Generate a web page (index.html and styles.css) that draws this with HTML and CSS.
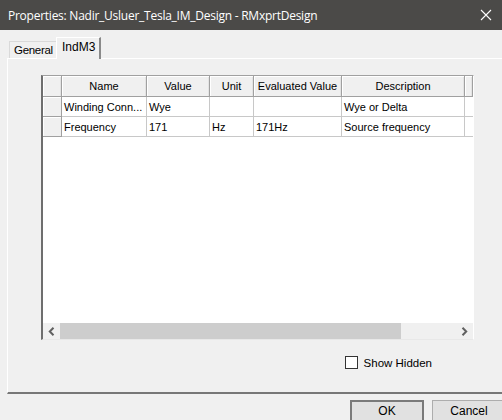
FILE: index.html
```html
<!DOCTYPE html>
<html>
<head>
<meta charset="utf-8">
<link rel="stylesheet" href="styles.css">
</head>
<body>
<div class="window">
  <div class="titlebar">
    <span class="title">Properties: Nadir_Usluer_Tesla_IM_Design - RMxprtDesign</span>
    <svg class="close" width="12" height="12" viewBox="0 0 12 12"><path d="M1 1 L11 11 M11 1 L1 11" stroke="#ffffff" stroke-width="1.1" fill="none"/></svg>
  </div>
  <div class="content">
    <div class="tabs">
      <div class="tab">General</div>
      <div class="tab active">IndM3</div>
    </div>
    <div class="panel">
      <div class="grid">
        <div class="row head">
          <div class="c rh"></div>
          <div class="c">Name</div>
          <div class="c">Value</div>
          <div class="c">Unit</div>
          <div class="c">Evaluated Value</div>
          <div class="c">Description</div>
          <div class="c last"></div>
        </div>
        <div class="row">
          <div class="c rh"></div>
          <div class="c">Winding Conn...</div>
          <div class="c">Wye</div>
          <div class="c"></div>
          <div class="c"></div>
          <div class="c">Wye or Delta</div>
          <div class="c last"></div>
        </div>
        <div class="row">
          <div class="c rh"></div>
          <div class="c">Frequency</div>
          <div class="c">171</div>
          <div class="c">Hz</div>
          <div class="c">171Hz</div>
          <div class="c">Source frequency</div>
          <div class="c last"></div>
        </div>
        <div class="blank"></div>
        <div class="hscroll">
          <div class="arrow"><svg width="7" height="9" viewBox="0 0 7 9"><path d="M5.5 0.8 L1.8 4.5 L5.5 8.2" stroke="#606060" stroke-width="2" fill="none"/></svg></div>
          <div class="thumb"></div>
          <div class="track"></div>
          <div class="arrow"><svg width="7" height="9" viewBox="0 0 7 9"><path d="M1.5 0.8 L5.2 4.5 L1.5 8.2" stroke="#606060" stroke-width="2" fill="none"/></svg></div>
        </div>
      </div>
      <div class="options">
        <label class="check"><span class="box"></span><span>Show Hidden</span></label>
      </div>
    </div>
    <div class="buttons">
      <div class="btn default">OK</div>
      <div class="btn">Cancel</div>
    </div>
  </div>
</div>
</body>
</html>
```
FILE: styles.css
```css
* { box-sizing: border-box; }
html, body { margin: 0; padding: 0; }
body {
  width: 502px;
  height: 420px;
  overflow: hidden;
  background: #f0f0f0;
  font-family: "Liberation Sans", Arial, sans-serif;
  font-size: 11px;
  color: #000;
}
.window { width: 502px; height: 420px; display: flex; flex-direction: column; }
.titlebar {
  height: 30px;
  background: #4b4a48;
  color: #fff;
  display: flex;
  align-items: center;
  justify-content: space-between;
  padding: 0 10px 0 8px;
  flex: none;
}
.title { font-family: "Open Sans", "Noto Sans", sans-serif; font-size: 12px; letter-spacing: -0.25px; }
.content { flex: 1; display: flex; flex-direction: column; padding-left: 7px; }
.tabs { display: flex; align-items: flex-end; height: 28px; padding-left: 2px; padding-top: 7px; }
.tab {
  font-family: "Liberation Sans", Arial, sans-serif;
  font-size: 11.5px;
  letter-spacing: -0.3px;
  height: 17px;
  padding: 2px 0 0 4px;
  border: 1px solid #d9d9d9;
  border-right: none;
  border-bottom: none;
  background: #f0f0f0;
  width: 47px;
  white-space: nowrap;
  overflow: hidden;
}
.tab.active {
  height: 22px;
  width: 45px;
  font-size: 12px;
  letter-spacing: 0;
  border-color: #ffffff #8a8a8a transparent #ffffff;
  border-style: solid;
  border-width: 1px 2px 0 1px;
  padding: 2px 0 0 5px;
  position: relative;
  top: 1px;
  background: #f0f0f0;
}
.panel {
  width: 510px;
  height: 336px;
  border-top: 1px solid #ffffff;
  border-left: 1px solid #ffffff;
  border-bottom: 2px solid #777777;
  padding: 16px 0 0 33px;
  display: flex;
  flex-direction: column;
}
.grid {
  width: 433px;
  height: 265px;
  border-top: 1px solid #a0a0a0;
  border-left: 2px solid #6e6e6e;
  border-right: 1px solid #ffffff;
  border-bottom: 1px solid #e8e8e8;
  background: #fff;
  display: flex;
  flex-direction: column;
  box-shadow: inset 0 1px 0 #6e6e6e;
}
.row {
  display: grid;
  grid-template-columns: 19px 85px 63px 44px 88px 123px 8px;
  height: 20px;
  flex: none;
}
.c {
  border-right: 1px solid #c8c8c8;
  border-bottom: 1px solid #c8c8c8;
  padding: 0 2px;
  display: flex;
  align-items: center;
  white-space: nowrap;
  overflow: hidden;
}
.c.last { border-right: none; }
.rh { background: #f0f0f0; border-right: 1px solid #a0a0a0; border-bottom: 1px solid #a0a0a0; box-shadow: inset 1px 1px 0 #ffffff; }
.head { height: 21px; }
.head .c {
  background: #f0f0f0;
  justify-content: center;
  border-right: 1px solid #a0a0a0;
  border-bottom: 1px solid #a0a0a0;
  box-shadow: inset 1px 1px 0 #ffffff, inset -1px 0 0 #e3e3e3;
}
.blank { flex: 1; }
.hscroll {
  height: 16px;
  display: flex;
  background: #f0f0f0;
  flex: none;
}
.arrow { width: 17px; display: flex; align-items: center; justify-content: center; flex: none; }
.thumb { width: 341px; background: #cdcdcd; flex: none; }
.track { flex: 1; }
.options { display: flex; justify-content: flex-end; padding: 16px 85px 0 0; }
.check { display: flex; align-items: center; gap: 6px; font-size: 11.5px; }
.box { width: 13px; height: 13px; border: 1px solid #333; background: #fff; display: inline-block; }
.buttons { display: flex; gap: 8px; padding: 6px 0 0 343px; }
.btn {
  width: 74px;
  height: 24px;
  flex: none;
  background: #e1e1e1;
  border: 1px solid #adadad;
  display: flex;
  align-items: center;
  justify-content: center;
  font-size: 12px;
  padding-bottom: 2px;
}
.btn.default { border: 2px solid #7a7a7a; }
```
